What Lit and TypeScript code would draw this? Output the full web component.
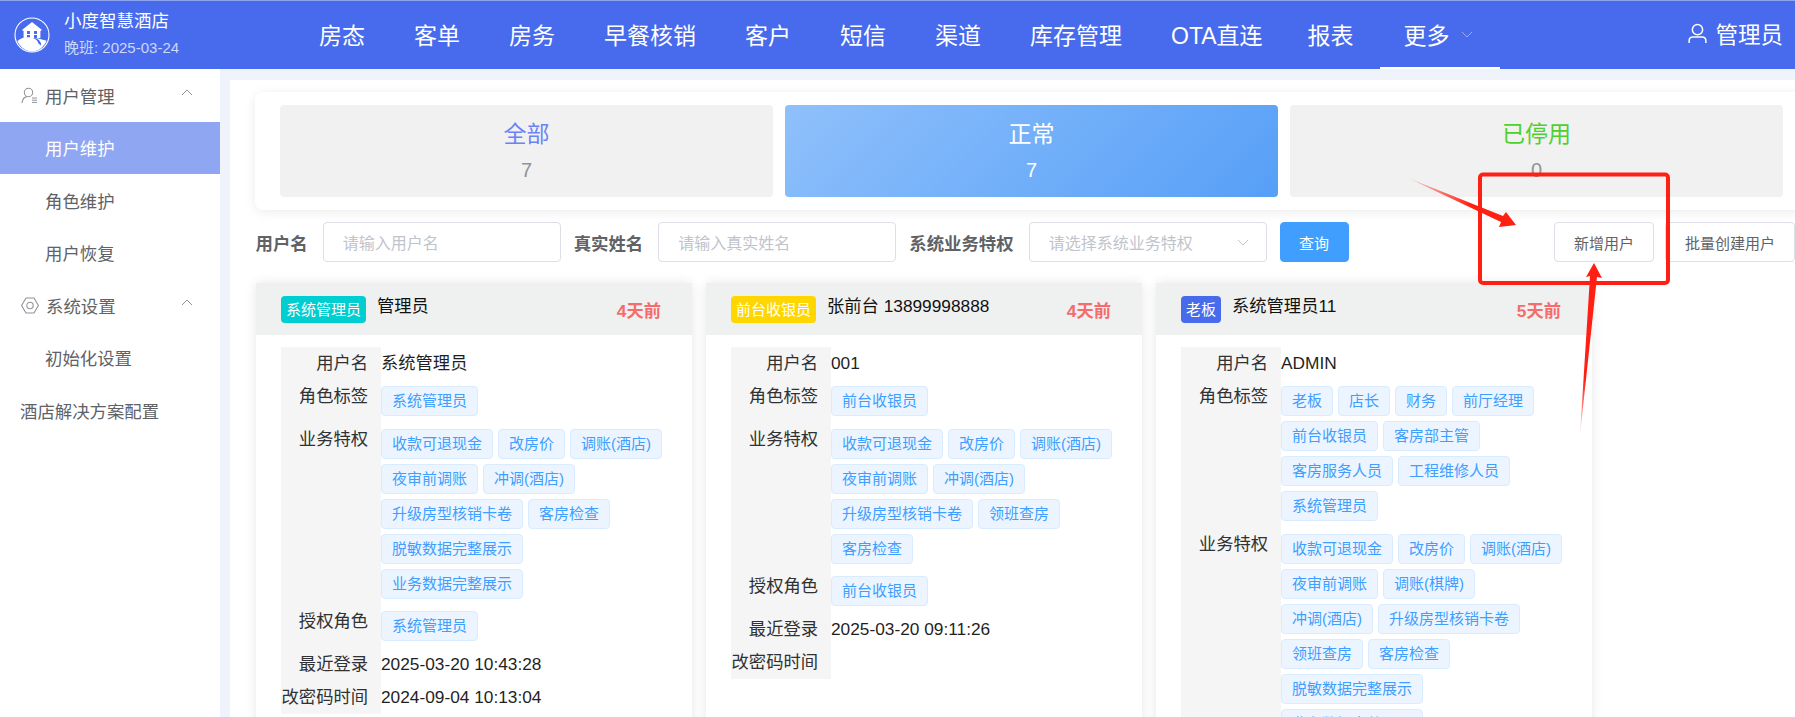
// app.ts - hotel PMS user maintenance page
import { LitElement, html, css, svg } from 'lit';
import { customElement } from 'lit/decorators.js';

interface UserCard {
  badge: string;
  badgeColor: string;
  name: string;
  ago: string;
  username: string;
  roles: string[];
  perms: string[];
  granted: string[];
  lastLogin: string;
  pwdTime: string;
}

const NAV = ['房态', '客单', '房务', '早餐核销', '客户', '短信', '渠道', '库存管理', 'OTA直连', '报表'];

const CARDS: UserCard[] = [
  {
    badge: '系统管理员',
    badgeColor: '#00ced1',
    name: '管理员',
    ago: '4天前',
    username: '系统管理员',
    roles: ['系统管理员'],
    perms: [
      '收款可退现金',
      '改房价',
      '调账(酒店)',
      '夜审前调账',
      '冲调(酒店)',
      '升级房型核销卡卷',
      '客房检查',
      '脱敏数据完整展示',
      '业务数据完整展示'
    ],
    granted: ['系统管理员'],
    lastLogin: '2025-03-20 10:43:28',
    pwdTime: '2024-09-04 10:13:04'
  },
  {
    badge: '前台收银员',
    badgeColor: '#ffd600',
    name: '张前台 13899998888',
    ago: '4天前',
    username: '001',
    roles: ['前台收银员'],
    perms: ['收款可退现金', '改房价', '调账(酒店)', '夜审前调账', '冲调(酒店)', '升级房型核销卡卷', '领班查房', '客房检查'],
    granted: ['前台收银员'],
    lastLogin: '2025-03-20 09:11:26',
    pwdTime: ''
  },
  {
    badge: '老板',
    badgeColor: '#476bec',
    name: '系统管理员11',
    ago: '5天前',
    username: 'ADMIN',
    roles: ['老板', '店长', '财务', '前厅经理', '前台收银员', '客房部主管', '客房服务人员', '工程维修人员', '系统管理员'],
    perms: [
      '收款可退现金',
      '改房价',
      '调账(酒店)',
      '夜审前调账',
      '调账(棋牌)',
      '冲调(酒店)',
      '升级房型核销卡卷',
      '领班查房',
      '客房检查',
      '脱敏数据完整展示',
      '业务数据完整展示'
    ],
    granted: ['系统管理员'],
    lastLogin: '',
    pwdTime: ''
  }
];

const chevron = (dir: 'up' | 'down') => html`
  <svg class="chev" viewBox="0 0 12 7" width="12" height="7">
    <path d=${dir === 'up' ? 'M1 6L6 1l5 5' : 'M1 1l5 5 5-5'} fill="none" stroke="currentColor" stroke-width="1" />
  </svg>
`;

@customElement('app-root')
export class AppRoot extends LitElement {
  static override styles = css`
    :host {
      display: block;
      position: relative;
      width: 100%;
      height: 717px;
      overflow: hidden;
      background: #eff3fb;
      font-family: 'Liberation Sans', 'Noto Sans CJK SC', sans-serif;
      color: #303133;
    }

    .topbar {
      display: flex;
      height: 69px;
      box-sizing: border-box;
      border-top: 1px solid #8ea3f0;
      background: #476bec;
      color: #fff;
    }

    .brand {
      display: flex;
      align-items: center;
      gap: 14px;
      width: 294.5px;
      flex: none;
      box-sizing: border-box;
      padding-left: 14px;
    }

    .brand-title {
      font-size: 17.5px;
      line-height: 24px;
      margin-top: -3px;
    }

    .brand-sub {
      font-size: 15px;
      line-height: 20px;
      margin-top: 5px;
      color: #cdd7fa;
    }

    .nav {
      display: flex;
      flex: 1;
    }

    .nav-item {
      display: flex;
      align-items: center;
      height: 68px;
      box-sizing: border-box;
      padding: 0 24.5px 2px;
      font-size: 23px;
      white-space: nowrap;
    }

    .nav-item:nth-child(9) {
      margin-right: -4px;
    }

    .nav-item.active {
      margin-left: 2px;
      padding: 0 27.5px 0 23.5px;
      gap: 11px;
      border-bottom: 2px solid #fff;
    }

    .nav-item .chev {
      color: rgba(255, 255, 255, 0.45);
    }

    .user {
      display: flex;
      align-items: center;
      gap: 8px;
      padding: 0 12px 4px 0;
      font-size: 22.5px;
    }

    .layout {
      display: flex;
      height: 648px;
    }

    .side {
      width: 220px;
      flex: none;
      background: #fff;
      color: #606266;
      font-size: 17.4px;
    }

    .side-item {
      display: flex;
      align-items: center;
      height: 52.5px;
      padding-left: 45px;
      padding-right: 27px;
      box-sizing: border-box;
    }

    .side-item.group {
      padding-left: 21px;
      gap: 7px;
    }

    .side-item.group .chev {
      margin-left: auto;
      margin-top: -6px;
      color: #909399;
    }

    .side-item.root {
      padding-left: 20px;
    }

    .side-item.active {
      background: #8fa6f2;
      color: #fff;
    }

    .main {
      flex: 1;
      min-width: 0;
      margin: 11px 0 0 10px;
      padding: 12px 0 0 25px;
      background: #fff;
      overflow: hidden;
    }

    .stats {
      display: grid;
      grid-template-columns: repeat(3, 493px);
      gap: 12px;
      width: 1553px;
      box-sizing: border-box;
      padding: 13px 25px;
      background: #fff;
      border-radius: 8px;
      box-shadow: 0 2px 12px rgba(0, 0, 0, 0.08);
    }

    .stat {
      height: 92px;
      border-radius: 4px;
      background: #f1f1f1;
      text-align: center;
      color: #909399;
    }

    .stat b {
      display: block;
      padding-top: 13px;
      font-weight: 400;
      font-size: 23px;
      line-height: 32px;
    }

    .stat span {
      display: block;
      margin-top: 8px;
      font-size: 20px;
      line-height: 24px;
    }

    .stat.all b {
      color: #6a84f6;
    }

    .stat.ok {
      background: linear-gradient(135deg, #8fc0fb, #569ff7);
      color: #fff;
    }

    .stat.off b {
      color: #4fd02f;
    }

    .filters {
      display: flex;
      align-items: center;
      height: 40px;
      margin-top: 12px;
      padding-left: 0.5px;
    }

    .filters label {
      flex: none;
      margin-right: 15px;
      font-size: 17.4px;
      font-weight: 700;
      color: #606266;
    }

    .input {
      display: flex;
      align-items: center;
      justify-content: space-between;
      flex: none;
      width: 238px;
      height: 40px;
      box-sizing: border-box;
      margin-right: 13px;
      padding: 0 17px 0 19px;
      border: 1px solid #dcdfe6;
      border-radius: 4px;
      font-size: 16px;
      color: #c0c4cc;
    }

    .btn {
      flex: none;
      height: 40px;
      box-sizing: border-box;
      padding: 0 19px;
      border: 1px solid #dcdfe6;
      border-radius: 4px;
      background: #fff;
      font: inherit;
      font-size: 15px;
      color: #606266;
    }

    .btn.primary {
      width: 69px;
      padding: 0;
      border-color: #409eff;
      background: #409eff;
      color: #fff;
    }

    .btn.add {
      margin-left: auto;
      margin-right: 11px;
    }

    .cards {
      display: flex;
      gap: 14px;
      margin: 21px 0 0 1px;
    }

    .card {
      flex: none;
      width: 436px;
      height: 500px;
      background: #fff;
      border-radius: 4px 4px 0 0;
      box-shadow: 0 0 12px rgba(0, 0, 0, 0.1);
    }

    .card-head {
      display: flex;
      align-items: center;
      height: 52px;
      box-sizing: border-box;
      padding: 0 31px 0 25px;
      background: #eff1f1;
    }

    .badge {
      flex: none;
      height: 27px;
      padding: 0 5px;
      margin-top: 1px;
      border-radius: 4px;
      font-size: 15px;
      line-height: 27px;
      color: #fff;
    }

    .card-name {
      margin: -9px 0 0 11px;
      font-size: 17.3px;
      color: #111;
    }

    .card-ago {
      margin: 0 0 0 auto;
      font-size: 17.3px;
      font-weight: 700;
      color: #f56c6c;
    }

    .rows {
      display: grid;
      grid-template-columns: 100px 1fr;
      margin: 12px 0 0 25px;
      font-size: 17.3px;
      line-height: 33px;
    }

    .key {
      padding-right: 13px;
      background: #f5f5f5;
      text-align: right;
      white-space: nowrap;
      color: #303133;
    }

    .val {
      min-height: 33px;
      box-sizing: border-box;
      color: #1f1f1f;
    }

    .tags {
      display: flex;
      flex-wrap: wrap;
      align-content: flex-start;
      gap: 5px;
      padding: 6.3px 26px 6.3px 0;
      line-height: 28px;
    }

    .tag {
      height: 30px;
      box-sizing: border-box;
      padding: 0 10px;
      border: 1px solid #d9ecff;
      border-radius: 4px;
      background: #ecf5ff;
      font-size: 15px;
      white-space: nowrap;
      color: #409eff;
    }

    .overlay {
      position: absolute;
      left: 0;
      top: 0;
      pointer-events: none;
    }
  `;

  private renderLogo() {
    return html`
      <svg viewBox="0 0 36 36" width="36" height="36">
        <circle cx="18" cy="18" r="17" fill="none" stroke="#fff" stroke-width="1.1" />
        <path d="M18 5l10 8-1.6 1V21H9.6v-7L8 13z" fill="#fff" />
        <path d="M13 14h3v3h-3zM20 14h3v3h-3zM13 18h3v3h-3zM20 18h3v3h-3z" fill="#476bec" />
        <path d="M3.4 24c4-3.6 8.6-4 14-3.6 6 .4 10 1.8 15.2 3.4C30 30 24.6 34.4 18 34.4 11.6 34.4 6 30 3.4 24z" fill="#fff" />
        <path d="M19 21c3 1.2 5 3 5.4 5.4l2.6 2.2c.6-3.4-2-6.4-6-7.6z" fill="#476bec" />
      </svg>
    `;
  }

  private renderTags(items: string[]) {
    return html`<div class="val tags">${items.map((t) => html`<span class="tag">${t}</span>`)}</div>`;
  }

  private renderCard(c: UserCard) {
    return html`
      <div class="card">
        <div class="card-head">
          <span class="badge" style="background:${c.badgeColor}">${c.badge}</span>
          <span class="card-name">${c.name}</span>
          <span class="card-ago">${c.ago}</span>
        </div>
        <div class="rows">
          <div class="key">用户名</div>
          <div class="val">${c.username}</div>
          <div class="key">角色标签</div>
          ${this.renderTags(c.roles)}
          <div class="key">业务特权</div>
          ${this.renderTags(c.perms)}
          <div class="key">授权角色</div>
          ${this.renderTags(c.granted)}
          <div class="key">最近登录</div>
          <div class="val">${c.lastLogin}</div>
          <div class="key">改密码时间</div>
          <div class="val">${c.pwdTime}</div>
        </div>
      </div>
    `;
  }

  // red markup drawn on top of the screenshot
  private renderMarkup() {
    return html`
      <svg class="overlay" width="1795" height="717" viewBox="0 0 1795 717">
        ${svg`
          <defs>
            <linearGradient id="a1" x1="1408" y1="178" x2="1470" y2="205" gradientUnits="userSpaceOnUse">
              <stop offset="0" stop-color="#ff2013" stop-opacity="0.15" />
              <stop offset="1" stop-color="#ff2013" />
            </linearGradient>
            <linearGradient id="a2" x1="1580" y1="435" x2="1584" y2="380" gradientUnits="userSpaceOnUse">
              <stop offset="0" stop-color="#ff2013" stop-opacity="0.15" />
              <stop offset="1" stop-color="#ff2013" />
            </linearGradient>
          </defs>
          <rect x="1480" y="174.5" width="188" height="108.5" rx="3" fill="none" stroke="#ff2013" stroke-width="4" />
          <path d="M1408 178L1503 216l3-4 10 13-17 2 2-5z" fill="url(#a1)" />
          <path d="M1580 435L1590 276l-4 1 8-14 8 15-5-1z" fill="url(#a2)" />
        `}
      </svg>
    `;
  }

  override render() {
    return html`
      <div class="topbar">
        <div class="brand">
          ${this.renderLogo()}
          <div>
            <div class="brand-title">小度智慧酒店</div>
            <div class="brand-sub">晚班: 2025-03-24</div>
          </div>
        </div>
        <div class="nav">
          ${NAV.map((n) => html`<div class="nav-item">${n}</div>`)}
          <div class="nav-item active">更多 ${chevron('down')}</div>
        </div>
        <div class="user">
          <svg viewBox="0 0 20 22" width="19" height="21">
            <circle cx="10" cy="7" r="5.4" fill="none" stroke="#fff" stroke-width="1.6" />
            <path d="M1.2 21v-2.4c0-2.4 1.8-4 4-4h9.6c2.2 0 4 1.6 4 4V21" fill="none" stroke="#fff" stroke-width="1.6" />
          </svg>
          管理员
        </div>
      </div>
      <div class="layout">
        <div class="side">
          <div class="side-item group">
            <svg viewBox="0 0 17 17" width="17" height="17">
              <circle cx="7.5" cy="5.5" r="4.2" fill="none" stroke="#909399" stroke-width="1.1" />
              <path d="M1 16c.4-3.4 2.6-6 5-6.4" fill="none" stroke="#909399" stroke-width="1.1" />
              <path d="M11 11h5M11 13.2h5M11 15.4h5" stroke="#909399" stroke-width="1" />
            </svg>
            用户管理 ${chevron('up')}
          </div>
          <div class="side-item active">用户维护</div>
          <div class="side-item">角色维护</div>
          <div class="side-item">用户恢复</div>
          <div class="side-item group">
            <svg viewBox="0 0 18 17" width="18" height="17">
              <path d="M5 1h8l4.4 7.5L13 16H5L.6 8.5z" fill="none" stroke="#909399" stroke-width="1.1" stroke-linejoin="round" />
              <circle cx="9" cy="8.5" r="3.2" fill="none" stroke="#909399" stroke-width="1.1" />
            </svg>
            系统设置 ${chevron('up')}
          </div>
          <div class="side-item">初始化设置</div>
          <div class="side-item root">酒店解决方案配置</div>
        </div>
        <div class="main">
          <div class="stats">
            <div class="stat all"><b>全部</b><span>7</span></div>
            <div class="stat ok"><b>正常</b><span>7</span></div>
            <div class="stat off"><b>已停用</b><span>0</span></div>
          </div>
          <div class="filters">
            <label>用户名</label>
            <div class="input">请输入用户名</div>
            <label>真实姓名</label>
            <div class="input">请输入真实姓名</div>
            <label>系统业务特权</label>
            <div class="input">请选择系统业务特权 ${chevron('down')}</div>
            <button class="btn primary">查询</button>
            <button class="btn add">新增用户</button>
            <button class="btn">批量创建用户</button>
          </div>
          <div class="cards">${CARDS.map((c) => this.renderCard(c))}</div>
        </div>
      </div>
      ${this.renderMarkup()}
    `;
  }
}

declare global {
  interface HTMLElementTagNameMap {
    'app-root': AppRoot;
  }
}
